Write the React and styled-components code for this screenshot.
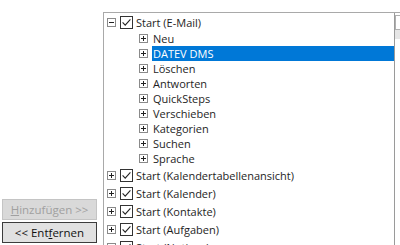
import React from 'react';
import styled, { createGlobalStyle } from 'styled-components';

const GlobalStyle = createGlobalStyle`
  html, body {
    margin: 0;
    padding: 0;
    background: #ffffff;
    overflow: hidden;
  }
  body {
    font-family: 'Open Sans', 'Noto Sans', Arial, sans-serif;
    font-size: 11px;
    color: #1e1e1e;
  }
`;

const items = [
  {
    label: 'Start (E-Mail)',
    open: true,
    children: [
      'Neu',
      'DATEV DMS',
      'Löschen',
      'Antworten',
      'QuickSteps',
      'Verschieben',
      'Kategorien',
      'Suchen',
      'Sprache',
    ],
  },
  { label: 'Start (Kalendertabellenansicht)' },
  { label: 'Start (Kalender)' },
  { label: 'Start (Kontakte)' },
  { label: 'Start (Aufgaben)' },
  { label: 'Start (Notizen)' },
];

const Expander = ({ open }) => (
  <ExpanderBox>
    <svg width="9" height="9" viewBox="0 0 9 9">
      <rect x="0.5" y="0.5" width="8" height="8" fill="#fff" stroke="#8a8a8a" />
      <line x1="2" y1="4.5" x2="7" y2="4.5" stroke="#222" />
      {!open && <line x1="4.5" y1="2" x2="4.5" y2="7" stroke="#222" />}
    </svg>
  </ExpanderBox>
);

const Check = () => (
  <CheckBox>
    <svg width="13" height="13" viewBox="0 0 13 13">
      <rect x="0.5" y="0.5" width="12" height="12" fill="#fff" stroke="#333" />
      <path d="M2.6 6.4 L5.2 9.1 L10.4 3.4" fill="none" stroke="#222" strokeWidth="1.1" />
    </svg>
  </CheckBox>
);

const App = () => {
  const selected = 'DATEV DMS';

  const renderTree = () => {
    return items.map((item) => (
      <React.Fragment key={item.label}>
        <TopRow>
          <Expander open={item.open} />
          <Check />
          <Label>{item.label}</Label>
        </TopRow>
        {item.open &&
          item.children.map((child) => (
            <ChildRow key={child}>
              <Expander />
              <Label $selected={child === selected}>{child}</Label>
            </ChildRow>
          ))}
      </React.Fragment>
    ));
  };

  return (
    <Page>
      <GlobalStyle />
      <ButtonColumn>
        <Button disabled>
          <u>H</u>inzufügen &gt;&gt;
        </Button>
        <Button $focused>
          &lt;&lt; Ent<u>f</u>ernen
        </Button>
      </ButtonColumn>
      <TreePanel>
        <Tree>{renderTree()}</Tree>
        <ScrollBar>
          <ArrowButton>
            <svg width="7" height="4" viewBox="0 0 7 4">
              <path d="M0 4 L3.5 0 L7 4 Z" fill="#606060" />
            </svg>
          </ArrowButton>
          <Thumb />
        </ScrollBar>
      </TreePanel>
    </Page>
  );
};

export default App;

const Page = styled.div`
  display: flex;
  width: 420px;
  height: 245px;
  overflow: hidden;
`;

const ButtonColumn = styled.div`
  width: 103px;
  box-sizing: border-box;
  padding: 0 0 2px 2px;
  display: flex;
  flex-direction: column;
  justify-content: flex-end;
  gap: 2px;
`;

const Button = styled.button`
  width: 95px;
  height: 21px;
  padding: 0;
  margin: 0;
  font-family: 'Open Sans', 'Noto Sans', Arial, sans-serif;
  font-size: 11.5px;
  background: ${(p) => (p.disabled ? '#d9d9d9' : '#e1e1e1')};
  color: ${(p) => (p.disabled ? '#a0a0a0' : '#111')};
  border: 1px solid ${(p) => (p.$focused ? '#3c3c3c' : '#c4c4c4')};
  u {
    text-decoration: underline;
  }
`;

const TreePanel = styled.div`
  margin-top: 12px;
  width: 310px;
  height: 260px;
  box-sizing: border-box;
  border: 1px solid #a9a9a9;
  display: flex;
  background: #fff;
`;

const Tree = styled.div`
  flex: 1;
  padding: 0 0 0 3px;
  display: flex;
  flex-direction: column;
`;

const TopRow = styled.div`
  display: flex;
  align-items: center;
  height: 18px;
  > span:first-child {
    margin-right: 4px;
  }
  > span:nth-child(2) {
    margin-right: 2px;
  }
`;

const ChildRow = styled.div`
  display: flex;
  align-items: center;
  height: 15px;
  padding-left: 32px;
  > span:first-child {
    margin-right: 4px;
  }
`;

const ExpanderBox = styled.span`
  display: flex;
  width: 9px;
  height: 9px;
`;

const CheckBox = styled.span`
  display: flex;
  width: 13px;
  height: 13px;
`;

const Label = styled.span`
  flex: ${(p) => (p.$selected ? 1 : 'none')};
  height: 15px;
  line-height: 15px;
  padding-left: 1px;
  white-space: nowrap;
  background: ${(p) => (p.$selected ? '#0078d7' : 'transparent')};
  color: ${(p) => (p.$selected ? '#fff' : '#1e1e1e')};
`;

const ScrollBar = styled.div`
  width: 17px;
  border-left: 1px solid #9a9a9a;
  padding-top: 2px;
  display: flex;
  flex-direction: column;
`;

const ArrowButton = styled.div`
  height: 13px;
  border: 1px solid #b0b0b0;
  display: flex;
  align-items: center;
  justify-content: center;
  background: #fff;
`;

const Thumb = styled.div`
  height: 9px;
  background: #e6e6e6;
`;
